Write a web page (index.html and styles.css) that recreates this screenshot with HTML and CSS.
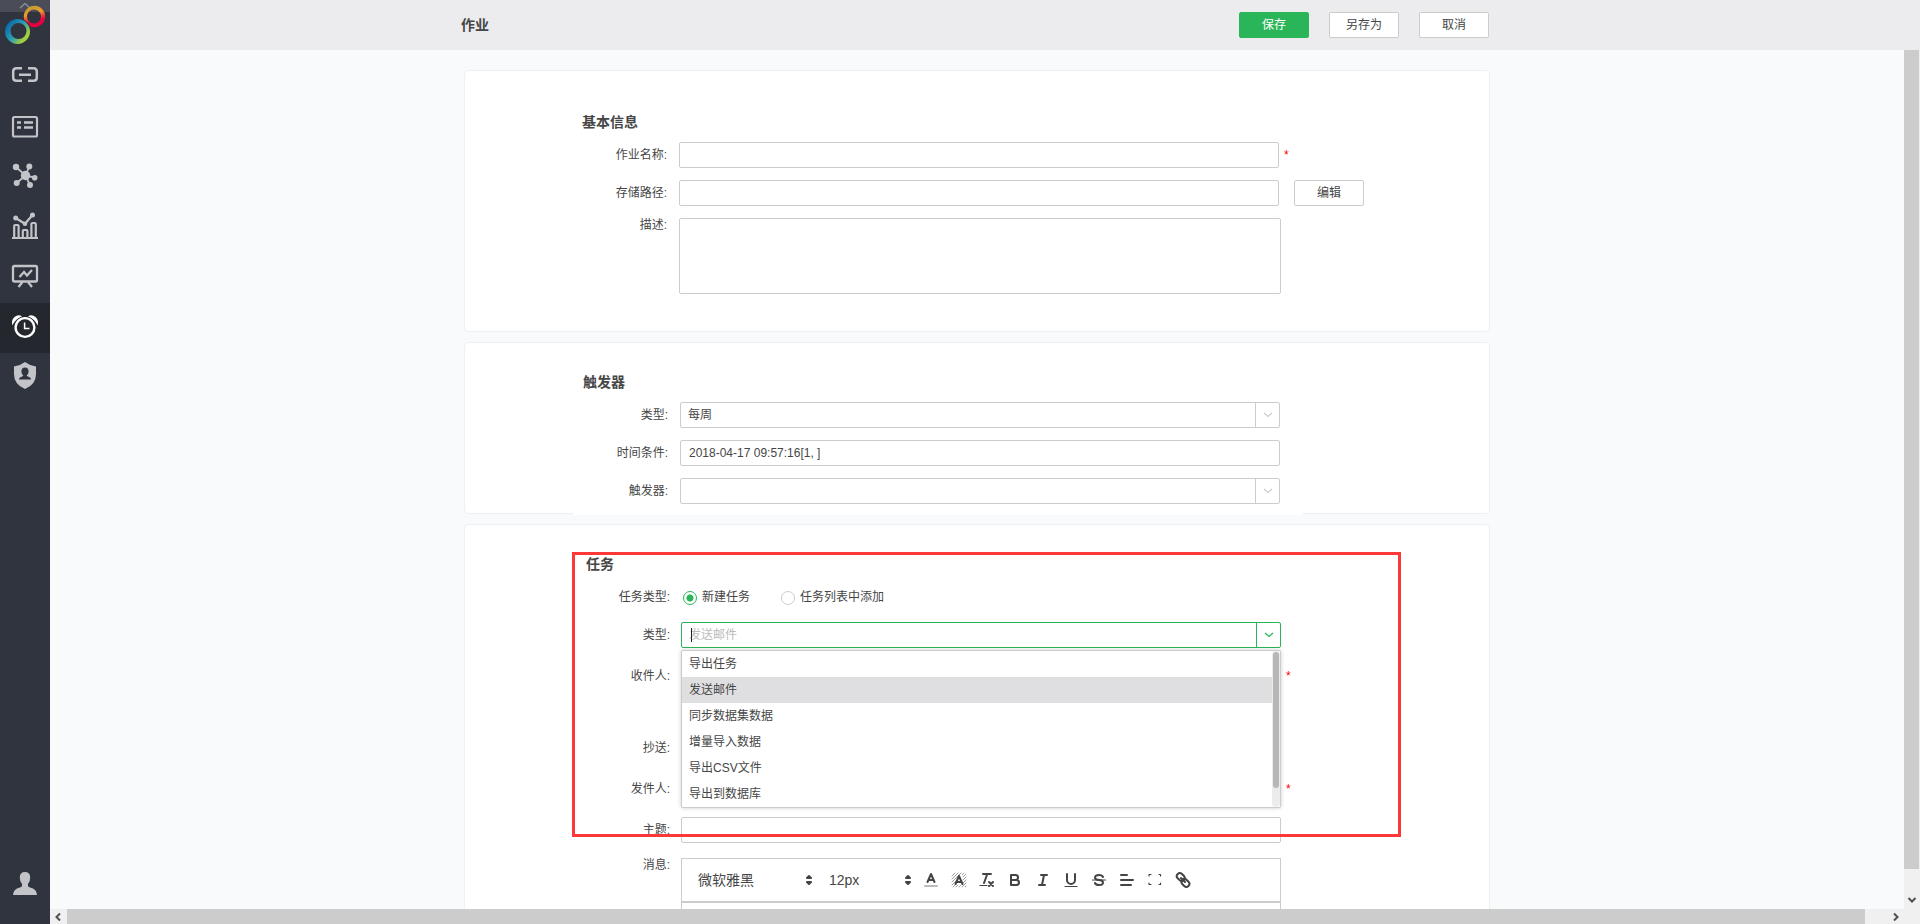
FILE: index.html
```html
<!DOCTYPE html>
<html lang="zh-CN">
<head>
<meta charset="utf-8">
<title>作业</title>
<link rel="stylesheet" href="styles.css">
</head>
<body>
<div class="app">
  <aside class="sidebar">
    <svg class="logo" viewBox="0 0 50 53" aria-hidden="true">
      <defs>
        <linearGradient id="warm" x1="0" y1="0" x2="0.3" y2="1"><stop offset="0" stop-color="#b3a02f"/><stop offset="0.45" stop-color="#f09a2c"/><stop offset="0.8" stop-color="#e6003f"/></linearGradient>
        <linearGradient id="cool" x1="0" y1="0.2" x2="0.9" y2="0.9"><stop offset="0" stop-color="#075fa8"/><stop offset="0.5" stop-color="#2b9fb5"/><stop offset="0.85" stop-color="#a5cf3a"/></linearGradient>
      </defs>
      <rect width="50" height="12" fill="#4a4c58"/>
      <path d="M20 8L25 3.500L30 8" fill="none" stroke="#8a8c94" stroke-width="1.500"/>
      <path fill="url(#warm)" fill-rule="evenodd" d="M34.500 5.800a10.700 10.700 0 1 1 0 21.400a10.700 10.700 0 1 1 0-21.400zM34 9.500a7 7 0 1 0 0 14a7 7 0 1 0 0-14z"/>
      <circle cx="17.500" cy="31.500" r="13.300" fill="#30343f"/>
      <path fill="url(#cool)" fill-rule="evenodd" d="M17.500 19a12.500 12.500 0 1 0 0 25a12.500 12.500 0 1 0 0-25zM18.500 23a8 8 0 1 1 0 16a8 8 0 1 1 0-16z"/>
    </svg>
    <nav class="nav" aria-label="主导航">
      <button class="nav-item" type="button" aria-label="连接">
        <svg class="nav-icon" viewBox="0 0 50 50" fill="none" stroke="currentColor" stroke-width="2.500"><path d="M22 15.200H16.500Q13.200 15.200 13.200 18.500V24.500Q13.200 27.800 16.500 27.800H22M28 15.200H33.500Q36.800 15.200 36.800 18.500V24.500Q36.800 27.800 33.500 27.800H28M19 21.700H31"/></svg>
      </button>
      <button class="nav-item" type="button" aria-label="数据集">
        <svg class="nav-icon" viewBox="0 0 50 50" fill="none" stroke="currentColor" stroke-width="2.200"><rect x="13" y="14" width="24" height="19.500" rx="1.500"/><path stroke-width="2.600" d="M17 19.500h4M24 19.500h9M17 24.500h4M24 24.500h9"/></svg>
      </button>
      <button class="nav-item" type="button" aria-label="自服务">
        <svg class="nav-icon" viewBox="0 0 50 50" fill="currentColor" stroke="currentColor"><path stroke-width="1.800" fill="none" d="M16 14L25.500 22.500L29.300 13.500M25.500 22.500L34.700 24.700M30 32L25.500 22.500L16.700 30"/><g stroke="none"><circle cx="25.500" cy="22.500" r="4.700"/><circle cx="16" cy="14" r="3.200"/><circle cx="29.300" cy="13.500" r="3"/><circle cx="34.700" cy="24.700" r="2.800"/><circle cx="30" cy="32" r="3"/><circle cx="16.700" cy="30" r="3"/></g></svg>
      </button>
      <button class="nav-item" type="button" aria-label="报表">
        <svg class="nav-icon" viewBox="0 0 50 50" fill="none" stroke="currentColor" stroke-width="2.200"><path d="M12 35H38M14.200 35V23Q14.200 22 15.200 22H17.600Q18.600 22 18.600 23V35M22.800 35V28Q22.800 27 23.800 27H26.400Q27.400 27 27.400 28V35M31.400 35V21Q31.400 20 32.400 20H34.800Q35.800 20 35.800 21V35"/><path d="M16 15.200L25 20.700L32.500 12"/><g fill="currentColor" stroke="none"><circle cx="15.700" cy="15" r="2.500"/><circle cx="25" cy="20.700" r="2.300"/><circle cx="32.500" cy="12" r="2.500"/></g></svg>
      </button>
      <button class="nav-item" type="button" aria-label="演示">
        <svg class="nav-icon" viewBox="0 0 50 50" fill="none" stroke="currentColor" stroke-width="2.300"><rect x="13" y="13" width="24" height="15.500" rx="1.500"/><path d="M19.500 24L24 19L27 22.500L32 17M22.500 29L18.500 34M28 29L32 34"/></svg>
      </button>
      <button class="nav-item nav-item--active" type="button" aria-label="调度任务">
        <svg class="nav-icon" viewBox="0 0 50 50" fill="none" stroke="currentColor"><circle cx="25" cy="24.500" r="9.400" stroke-width="2.400"/><path stroke-width="1.500" d="M24.600 19.500V25.500H29.500"/><path stroke="none" fill="currentColor" d="M12.500 22.500Q10.800 17.500 14.500 14Q18 11 22 13.200Q15 16 12.500 22.500zM37.500 22.500Q39.200 17.500 35.500 14Q32 11 28 13.200Q35 16 37.500 22.500z"/></svg>
      </button>
      <button class="nav-item" type="button" aria-label="权限">
        <svg class="nav-icon" viewBox="0 0 50 50"><path fill="currentColor" d="M25 9Q29.500 12.500 36 13.500V21Q36 31.500 25 36Q14 31.500 14 21V13.500Q20.500 12.500 25 9z"/><path fill="#30343f" d="M25 14.500a3.600 4 0 0 1 3.600 4Q28.600 21 26.700 22.300Q26.700 23.500 29.500 24.200Q31 24.800 31 26.500H19Q19 24.800 20.500 24.200Q23.300 23.500 23.300 22.300Q21.400 21 21.400 18.500a3.600 4 0 0 1 3.600-4z"/></svg>
      </button>
    </nav>
    <button class="nav-item nav-item--user" type="button" aria-label="用户">
      <svg class="nav-icon" viewBox="0 0 50 50"><path fill="currentColor" d="M25 12Q30.200 12 30.200 17.500Q30.200 22 28 24V26Q28 26.800 30 27.400Q37 29 37 35H13Q13 29 20 27.400Q22 26.800 22 26V24Q19.800 22 19.800 17.500Q19.800 12 25 12z"/></svg>
    </button>
  </aside>

  <div class="page">
    <header class="header">
      <div class="header-inner">
        <h1 class="header-title">作业</h1>
        <div class="header-actions">
          <button class="btn btn--primary" type="button">保存</button>
          <button class="btn" type="button">另存为</button>
          <button class="btn" type="button">取消</button>
        </div>
      </div>
    </header>

    <main class="viewport">
      <section class="card">
        <form class="form form--basic">
          <h2 class="form-title">基本信息</h2>
          <div class="row">
            <label class="label" for="job-name">作业名称:</label>
            <input class="field" id="job-name" type="text">
            <span class="required">*</span>
          </div>
          <div class="row">
            <label class="label" for="job-path">存储路径:</label>
            <input class="field" id="job-path" type="text">
            <button class="btn btn--edit" type="button">编辑</button>
          </div>
          <div class="row">
            <label class="label label--top" for="job-desc">描述:</label>
            <textarea class="field field--area" id="job-desc"></textarea>
          </div>
        </form>
      </section>

      <section class="card">
        <form class="form form--trigger">
          <h2 class="form-title">触发器</h2>
          <div class="row">
            <label class="label" for="trigger-type">类型:</label>
            <div class="combo">
              <select class="combo-input" id="trigger-type"><option>每周</option></select>
              <span class="combo-arrow"><svg class="chevron" viewBox="0 0 10 6"><path d="M1 1L5 4.500L9 1"/></svg></span>
            </div>
          </div>
          <div class="row">
            <label class="label" for="trigger-time">时间条件:</label>
            <input class="field" id="trigger-time" type="text" value="2018-04-17 09:57:16[1, ]">
          </div>
          <div class="row">
            <label class="label" for="trigger-name">触发器:</label>
            <div class="combo">
              <select class="combo-input" id="trigger-name"><option></option></select>
              <span class="combo-arrow"><svg class="chevron" viewBox="0 0 10 6"><path d="M1 1L5 4.500L9 1"/></svg></span>
            </div>
          </div>
        </form>
      </section>

      <section class="card card--task">
        <form class="form form--task">
          <h2 class="form-title">任务</h2>
          <div class="row">
            <span class="label" id="task-kind">任务类型:</span>
            <div class="radios" role="radiogroup" aria-labelledby="task-kind">
              <label class="radio"><input class="radio-input" type="radio" name="kind" checked>新建任务</label>
              <label class="radio"><input class="radio-input" type="radio" name="kind">任务列表中添加</label>
            </div>
          </div>
          <div class="row">
            <label class="label" for="task-type">类型:</label>
            <div class="combo combo--open">
              <input class="combo-input" id="task-type" type="text" role="combobox" aria-expanded="true" aria-controls="task-options" placeholder="发送邮件">
              <span class="caret"></span>
              <button class="combo-arrow" type="button" aria-label="展开"><svg class="chevron" viewBox="0 0 10 6"><path d="M1 1L5 4.500L9 1"/></svg></button>
              <div class="menu">
                <ul class="options" id="task-options" role="listbox">
                  <li class="option" role="option">导出任务</li>
                  <li class="option option--selected" role="option" aria-selected="true">发送邮件</li>
                  <li class="option" role="option">同步数据集数据</li>
                  <li class="option" role="option">增量导入数据</li>
                  <li class="option" role="option">导出CSV文件</li>
                  <li class="option" role="option">导出到数据库</li>
                </ul>
                <div class="menu-track"><div class="menu-thumb"></div></div>
              </div>
            </div>
          </div>
          <div class="row row--spaced">
            <label class="label" for="mail-to">收件人:</label>
            <textarea class="field field--mail" id="mail-to"></textarea>
            <span class="required">*</span>
          </div>
          <div class="row">
            <label class="label" for="mail-cc">抄送:</label>
            <input class="field" id="mail-cc" type="text">
          </div>
          <div class="row row--spaced">
            <label class="label" for="mail-from">发件人:</label>
            <input class="field" id="mail-from" type="text">
            <span class="required">*</span>
          </div>
          <div class="row row--spaced">
            <label class="label" for="mail-subject">主题:</label>
            <input class="field" id="mail-subject" type="text">
          </div>
          <div class="row row--spaced">
            <label class="label label--top" for="mail-body">消息:</label>
            <div class="editor">
              <div class="toolbar">
                <div class="picker picker--font">
                  <select class="picker-input" aria-label="字体"><option>微软雅黑</option></select>
                  <svg class="tool-icon" viewBox="0 0 18 18"><path class="solid" d="M7 11L9 13L11 11zM7 7L9 5L11 7z"/></svg>
                </div>
                <div class="picker picker--size">
                  <select class="picker-input" aria-label="字号"><option>12px</option></select>
                  <svg class="tool-icon" viewBox="0 0 18 18"><path class="solid" d="M7 11L9 13L11 11zM7 7L9 5L11 7z"/></svg>
                </div>
                <button class="tool" type="button" aria-label="文字颜色"><svg class="tool-icon" viewBox="0 0 18 18"><path class="faint" d="M3 15H15"/><path d="M5.500 11L9 3L12.500 11M11.600 9H6.400"/></svg></button>
                <button class="tool" type="button" aria-label="背景颜色"><svg class="tool-icon" viewBox="0 0 18 18"><path class="hatch" d="M2 5L5 2M2 8L8 2M2 11L11 2M2 14L6 10M3 16L6 13M6 16L8 14M9 16L11 14M12 16L16 12M15 16L16 15M12 4L14 2M13 6L16 3M13 9L16 6M13 12L16 9"/><path d="M5.500 13L9 5L12.500 13M11.600 11H6.400"/></svg></button>
                <button class="tool" type="button" aria-label="清除格式"><svg class="tool-icon" viewBox="0 0 18 18"><path d="M5 3H13M6 12L9.300 3M11 11L15 15M15 11L11 15"/><path class="thin" d="M2 14.500H9"/></svg></button>
                <button class="tool" type="button" aria-label="粗体"><svg class="tool-icon" viewBox="0 0 18 18"><path d="M5 4H9.500A2.500 2.500 0 0 1 9.500 9H5zM5 9H10.500A2.500 2.500 0 0 1 10.500 14H5z"/></svg></button>
                <button class="tool" type="button" aria-label="斜体"><svg class="tool-icon" viewBox="0 0 18 18"><path d="M7 4H13M5 14H11M8 14L10 4"/></svg></button>
                <button class="tool" type="button" aria-label="下划线"><svg class="tool-icon" viewBox="0 0 18 18"><path d="M5 3V9A4 4 0 0 0 13 9V3"/><path class="thin" d="M3 15.500H15"/></svg></button>
                <button class="tool" type="button" aria-label="删除线"><svg class="tool-icon" viewBox="0 0 18 18"><path d="M13 6C12.500 4.800 11 4 9 4C6.800 4 5 5 5 6.500C5 8.300 6.500 8.800 9 9C11.500 9.200 13 9.800 13 11.500C13 13 11.200 14 9 14C7 14 5.500 13.200 5 12"/><path class="thin" d="M2.500 9H15.500"/></svg></button>
                <button class="tool" type="button" aria-label="对齐"><svg class="tool-icon" viewBox="0 0 18 18"><path d="M3 4H9M3 9H15M3 14H13"/></svg></button>
                <button class="tool" type="button" aria-label="全屏"><svg class="tool-icon" viewBox="0 0 18 18"><path class="thin" d="M3 5V3.500H5M13 3.500H14.500V5M3 12V13.500H5M13 13.500H14.500V12"/></svg></button>
                <button class="tool" type="button" aria-label="链接"><svg class="tool-icon" viewBox="0 0 18 18"><rect x="2.500" y="3" width="8.500" height="6" rx="3" transform="rotate(45 6.700 6)"/><rect x="7.200" y="9" width="8.500" height="6" rx="3" transform="rotate(45 11.500 12)"/><path d="M7 7L11 11"/></svg></button>
              </div>
              <textarea class="editor-body" id="mail-body"></textarea>
            </div>
          </div>
        </form>
        <div class="highlight"></div>
      </section>
    </main>

    <div class="vbar" aria-hidden="true">
      <div class="vbar-thumb"></div>
      <svg class="bar-arrow" viewBox="0 0 16 16"><path d="M4.500 6L8 9.500L11.500 6"/></svg>
    </div>
    <div class="hbar" aria-hidden="true">
      <svg class="bar-arrow" viewBox="0 0 16 16"><path d="M10 4.500L6.500 8L10 11.500"/></svg>
      <div class="hbar-thumb"></div>
      <svg class="bar-arrow bar-arrow--right" viewBox="0 0 16 16"><path d="M6 4.500L9.500 8L6 11.500"/></svg>
    </div>
  </div>
</div>
</body>
</html>
```
FILE: styles.css
```css
* {
  box-sizing: border-box;
}

body {
  margin: 0;
  color: #464646;
  font: 12px/26px "Liberation Sans", "Noto Sans CJK SC", sans-serif;
}

button,
input,
select,
textarea {
  margin: 0;
  color: inherit;
  font: inherit;
}

.app {
  display: flex;
  height: 100vh;
  overflow: hidden;
}

/* Sidebar */
.sidebar {
  display: flex;
  flex-direction: column;
  flex: none;
  width: 50px;
  padding-bottom: 14px;
  background: #30343f;
}

.logo {
  display: block;
  flex: none;
  width: 50px;
  height: 53px;
}

.nav {
  display: flex;
  flex-direction: column;
}

.nav-item {
  display: block;
  height: 50px;
  padding: 0;
  border: 0;
  background: none;
  color: #c3c4c8;
}

.nav-item--active {
  background: #24272e;
  color: #fff;
}

.nav-item--user {
  margin-top: auto;
}

.nav-icon {
  display: block;
  width: 50px;
  height: 50px;
}

/* Page frame */
.page {
  display: grid;
  flex: 1;
  grid-template-columns: minmax(0, 1fr) 16px;
  grid-template-rows: 50px minmax(0, 1fr) 15px;
  min-width: 0;
}

.header {
  grid-column: 1 / -1;
  padding-right: 16px;
  background: #ececee;
}

.header-inner {
  display: flex;
  align-items: center;
  justify-content: space-between;
  max-width: 1032px;
  height: 50px;
  margin: 0 auto;
  padding-right: 4px;
}

.header-title,
.form-title {
  margin: 0;
  font-size: 14px;
  font-weight: bold;
  line-height: 20px;
}

.header-actions {
  display: flex;
  gap: 20px;
}

.btn {
  flex: none;
  width: 70px;
  height: 26px;
  padding: 0;
  border: 1px solid #ccc;
  border-radius: 2px;
  background: #fff;
  line-height: 24px;
}

.btn--primary {
  border-color: #2ab658;
  background: #2ab658;
  color: #fff;
}

.btn--edit {
  margin-left: 15px;
}

.viewport {
  padding-top: 20px;
  overflow: hidden;
  background: #f9fafc;
}

.card {
  max-width: 1026px;
  margin: 0 auto 10px;
  border: 1px solid #eff0f2;
  border-radius: 4px;
  background: #fff;
}

.card--task {
  position: relative;
}

/* Forms */
.form {
  display: flex;
  flex-direction: column;
  gap: 12px;
  width: 730px;
  margin-left: 108px;
  background: #fff;
}

.form--basic {
  padding: 41px 0 37px;
}

.form--trigger {
  margin-bottom: -2px;
  padding: 29px 0 11px 1px;
}

.form--task {
  padding: 29px 0 37px 3px;
}

.form-title {
  margin-bottom: -2px;
  padding-left: 9px;
}

.form--task .form-title {
  padding-left: 10px;
}

.row {
  display: flex;
  align-items: flex-start;
}

.row--spaced {
  padding-top: 3px;
}

.label {
  flex: none;
  width: 94px;
  margin-right: 12px;
  line-height: 26px;
  text-align: right;
}

.form--task .label {
  margin-right: 11px;
}

.label.label--top {
  line-height: 14px;
}

.field {
  flex: none;
  width: 600px;
  height: 26px;
  padding: 0 8px;
  border: 1px solid #ccc;
  border-radius: 2px;
  background: #fff;
}

.field--area {
  width: 602px;
  height: 76px;
  resize: none;
}

.field--mail {
  height: 60px;
  resize: none;
}

.required {
  margin-left: 5px;
  color: #f00;
}

/* Combo box */
.combo {
  position: relative;
  display: flex;
  flex: none;
  width: 600px;
  height: 26px;
  border: 1px solid #ccc;
  border-radius: 2px;
}

.combo-input {
  flex: 1;
  min-width: 0;
  padding: 0 7px;
  border: 0;
  outline: 0;
  background: none;
  line-height: 24px;
  appearance: none;
}

.combo-input::placeholder {
  color: #bbb;
  opacity: 1;
}

.combo-arrow {
  display: flex;
  align-items: center;
  justify-content: center;
  width: 24px;
  padding: 0;
  border: 0;
  border-left: 1px solid #ccc;
  background: none;
  color: #ccc;
}

.chevron {
  width: 10px;
  height: 6px;
  fill: none;
  stroke: currentColor;
  stroke-width: 1.3;
}

.combo--open,
.combo--open .combo-arrow {
  border-color: #2ab658;
}

.combo--open .combo-arrow {
  color: #2ab658;
}

.caret {
  position: absolute;
  top: 5px;
  left: 9px;
  width: 1px;
  height: 14px;
  background: #222;
}

.menu {
  position: absolute;
  z-index: 2;
  top: 27px;
  right: -1px;
  left: -1px;
  display: flex;
  border: 1px solid #ccc;
  border-radius: 2px;
  background: #fff;
  box-shadow: 0 0 4px rgba(0, 0, 0, 0.2);
}

.options {
  flex: 1;
  margin: 0;
  padding: 0;
  list-style: none;
}

.option {
  padding: 0 7px;
  line-height: 26px;
}

.option--selected {
  background: #dfdfe1;
}

.menu-track {
  width: 8px;
  padding: 1px;
  border-radius: 4px;
  background: #ececec;
}

.menu-thumb {
  height: 88%;
  border-radius: 3px;
  background: #b7b7b7;
}

/* Radio buttons */
.radios {
  display: flex;
  gap: 31px;
  padding-left: 2px;
}

.radio {
  display: flex;
  gap: 5px;
}

.radio-input {
  width: 14px;
  height: 14px;
  margin-top: 7px;
  border: 1px solid #ccc;
  border-radius: 50%;
  background: #fff;
  appearance: none;
}

.radio-input:checked {
  border-color: #2ab658;
  background: radial-gradient(circle, #2ab658 3px, #fff 4px);
}

/* Message editor */
.editor {
  flex: none;
  width: 600px;
  border: 1px solid #ccc;
}

.toolbar {
  display: flex;
  align-items: center;
  height: 43px;
  padding-left: 16px;
  border-bottom: 1px solid #ccc;
  font-size: 14px;
}

.picker {
  display: flex;
  align-items: center;
}

.picker--font {
  width: 120px;
}

.picker--size {
  width: 99px;
  padding-left: 11px;
}

.picker-input {
  flex: 1;
  min-width: 0;
  padding: 0;
  border: 0;
  background: none;
  appearance: none;
}

.tool {
  display: flex;
  justify-content: center;
  width: 28px;
  padding: 0;
  border: 0;
  background: none;
}

.tool-icon {
  width: 18px;
  height: 18px;
  fill: none;
  stroke: #444;
  stroke-width: 2;
  stroke-linecap: round;
  stroke-linejoin: round;
}

.solid {
  fill: #444;
}

.thin {
  stroke-width: 1.2;
}

.faint {
  stroke: #bbb;
}

.hatch {
  stroke: #999;
  stroke-width: 1;
}

.editor-body {
  display: block;
  width: 100%;
  height: 200px;
  border: 0;
  border-top: 1px solid #ccc;
  resize: none;
}

/* Annotation frame laid over the task form */
.highlight {
  position: absolute;
  z-index: 3;
  top: 27px;
  left: 107px;
  width: 829px;
  height: 285px;
  border: 3px solid #fd3838;
  pointer-events: none;
}

/* Scroll bars */
.vbar,
.hbar {
  display: flex;
  background: #f0f0f0;
}

.vbar {
  flex-direction: column;
  justify-content: space-between;
  grid-row: 2 / 4;
  grid-column: 2;
  padding: 0 1px 16px 0;
}

.vbar-thumb {
  height: 95.5%;
  background: #ccc;
}

.hbar {
  grid-row: 3;
  grid-column: 1;
  align-items: center;
}

.hbar-thumb {
  width: 97%;
  height: 15px;
  margin-left: 1px;
  background: #ccc;
}

.bar-arrow {
  flex: none;
  width: 16px;
  height: 16px;
  fill: none;
  stroke: #505050;
  stroke-width: 2;
}

.bar-arrow--right {
  margin-left: auto;
}
```
